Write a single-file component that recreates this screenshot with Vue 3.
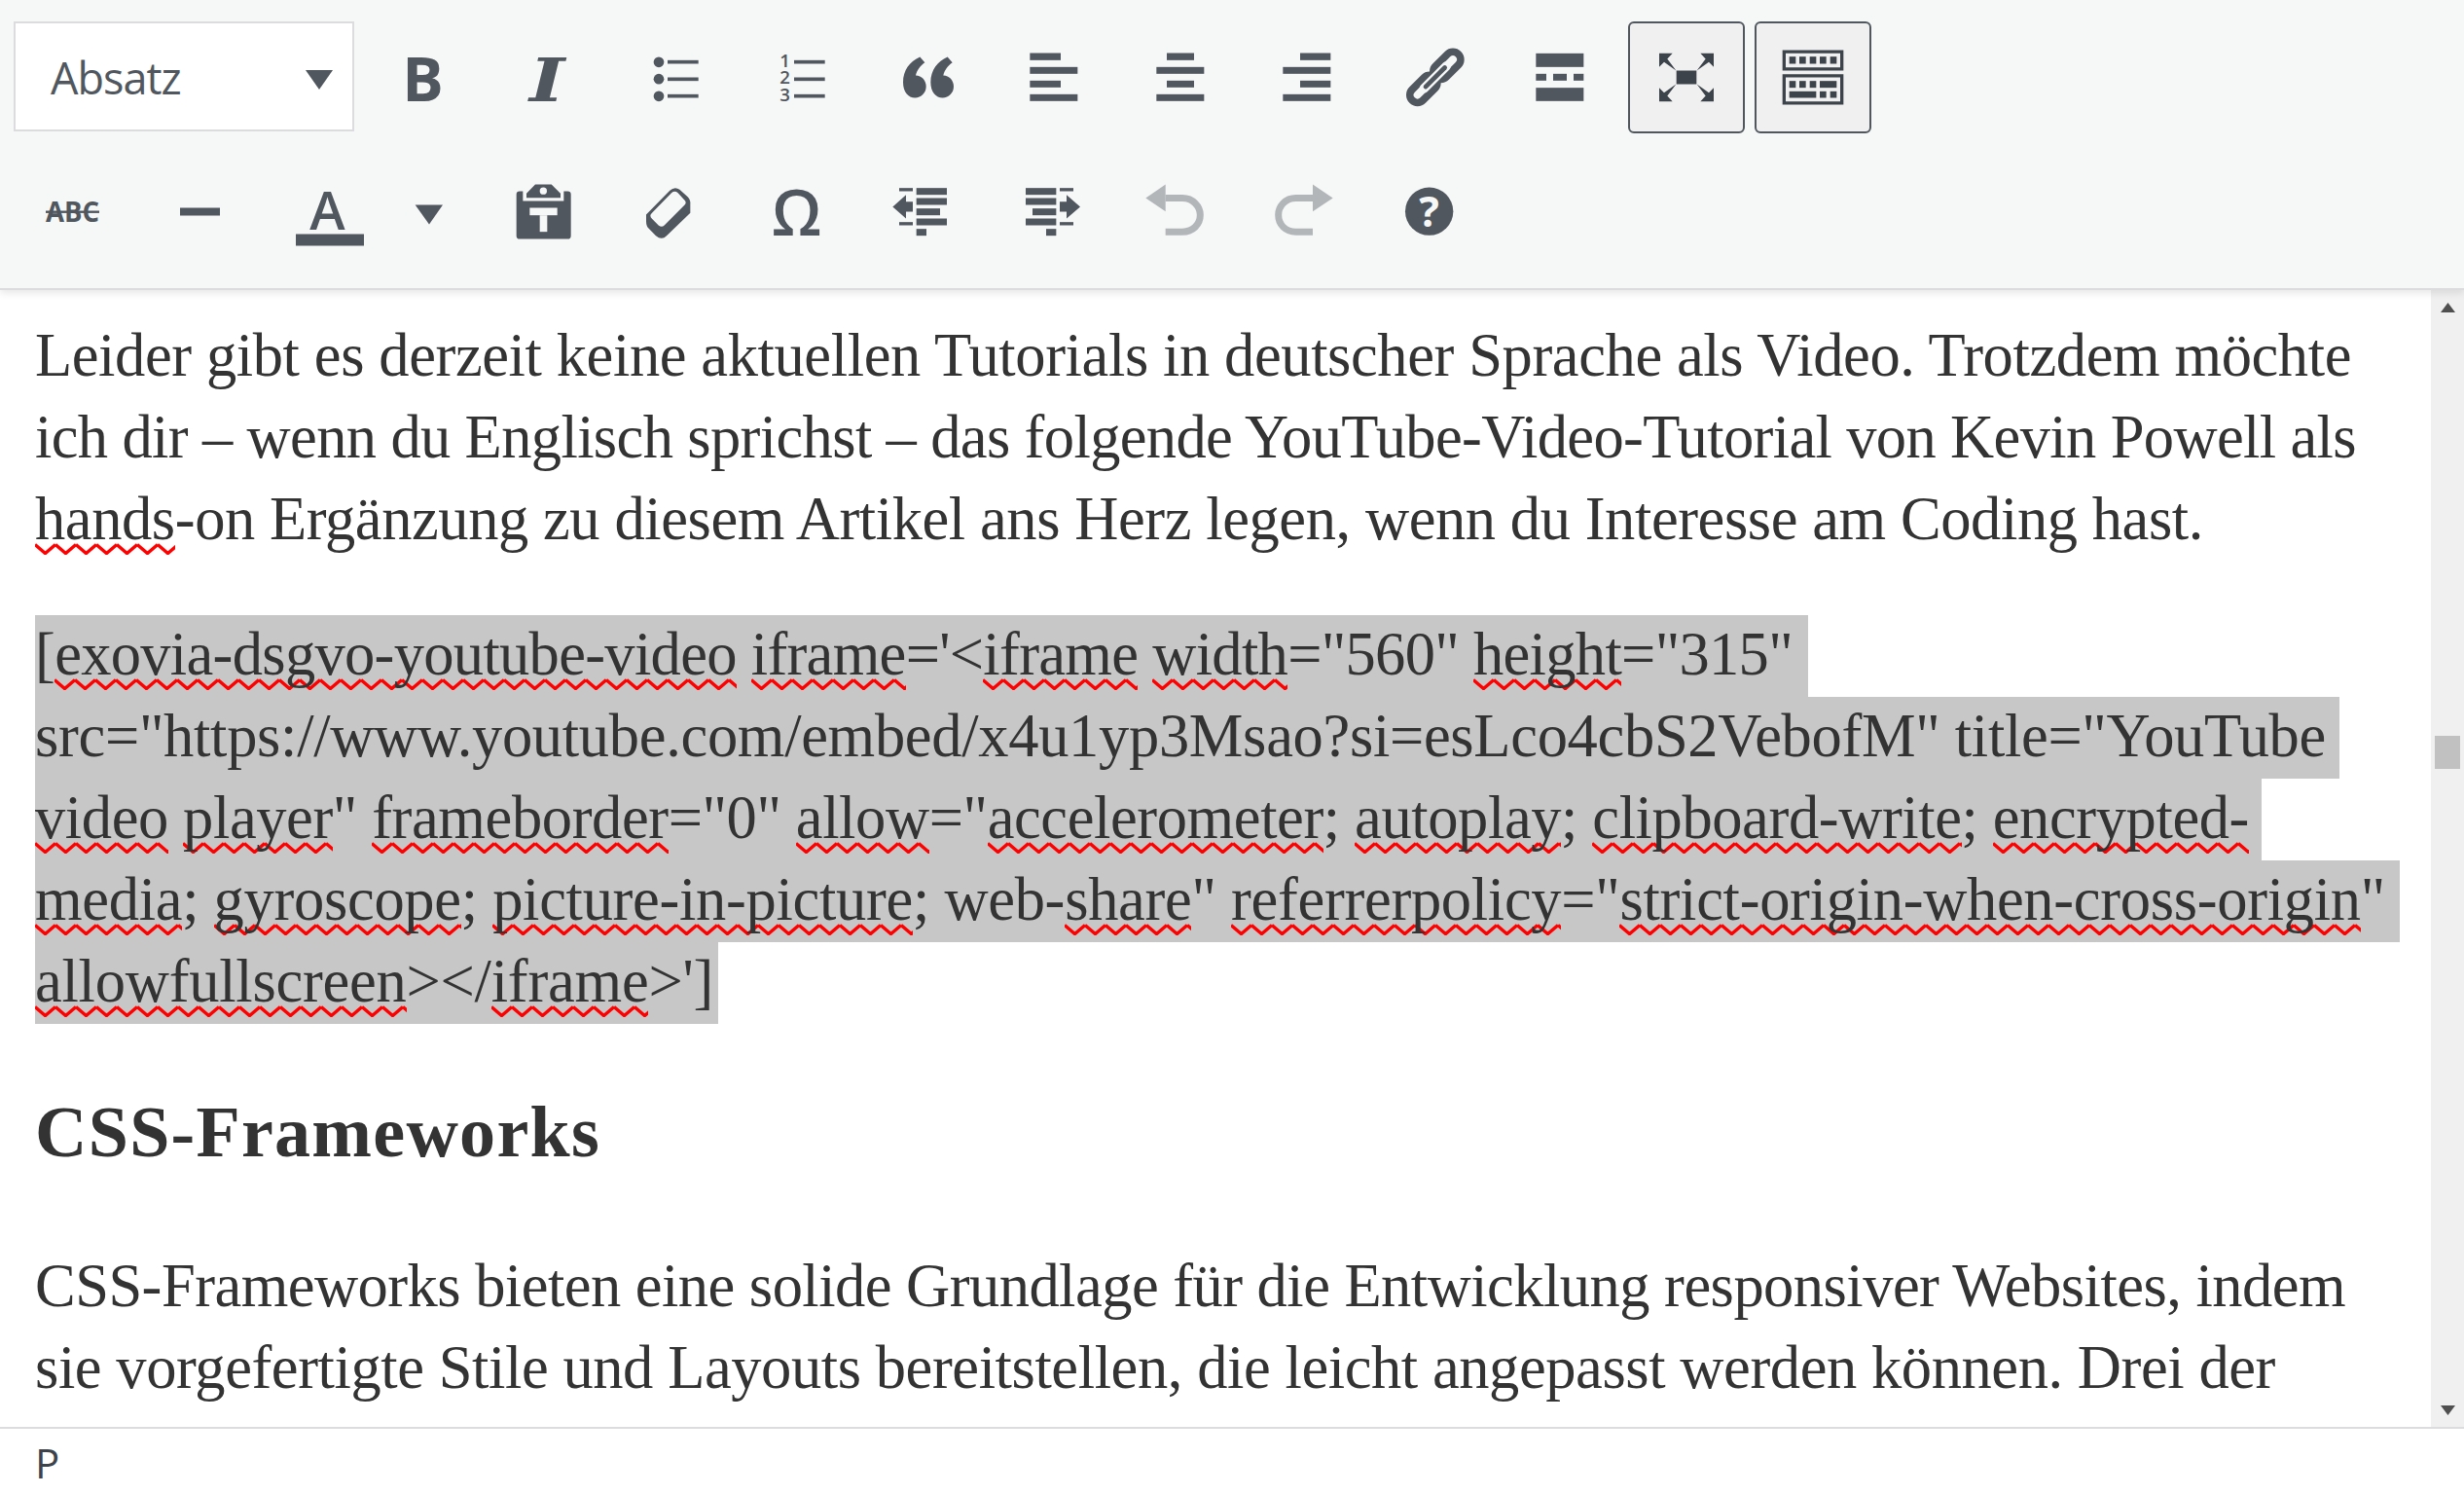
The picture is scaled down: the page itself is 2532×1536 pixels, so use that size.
<script setup>
import { reactive, onMounted } from 'vue'

const mk = (text, target, bg) => ({
  segs: text.split('~').map((t, i) => ({ t, wave: i % 2 === 1 })),
  chars: text.replace(/~/g, '').length,
  target,
  bg,
  ls: 0
})

const blocks = reactive([
  { cls: 'para first', lines: [
    mk('Leider gibt es derzeit keine aktuellen Tutorials in deutscher Sprache als Video. Trotzdem möchte', 2380),
    mk('ich dir – wenn du Englisch sprichst – das folgende YouTube-Video-Tutorial von Kevin Powell als', 2385),
    mk('~hands~-on Ergänzung zu diesem Artikel ans Herz legen, wenn du Interesse am Coding hast.', 2228)
  ] },
  { cls: 'para selected', lines: [
    mk('[~exovia-dsgvo-youtube-video~ ~iframe~=\'<~iframe~ ~width~="560" ~height~="315"', 1806, 1822),
    mk('src="https://www.youtube.com/embed/x4u1yp3Msao?si=esLco4cbS2VebofM" title="YouTube', 2354, 2368),
    mk('~video~ ~player~" ~frameborder~="0" ~allow~="~accelerometer~; ~autoplay~; ~clipboard-write~; ~encrypted-~', 2275, 2288),
    mk('~media~; ~gyroscope~; ~picture-in-picture~; web-~share~" ~referrerpolicy~="~strict-origin-when-cross-origin~"', 2415, 2430),
    mk('~allowfullscreen~></~iframe~>\']', 697, 702)
  ] },
  { cls: 'heading', lines: [mk('CSS-Frameworks', 581)] },
  { cls: 'para', lines: [
    mk('CSS-Frameworks bieten eine solide Grundlage für die Entwicklung responsiver Websites, indem', 2374),
    mk('sie vorgefertigte Stile und Layouts bereitstellen, die leicht angepasst werden können. Drei der', 2302)
  ] }
])

const runs = new Map()
const setRun = (line, el) => { if (el) runs.set(line, el) }

onMounted(() => {
  runs.forEach((el, line) => {
    const w = el.getBoundingClientRect().width
    line.ls = (line.target - w) / line.chars
  })
})
</script>

<template>
  <div class="editor">
    <header class="toolbar">
      <div class="row">
        <div class="select">
          <span class="select-label">Absatz</span>
          <svg class="select-caret" viewBox="0 0 28 20"><path d="M0 0H28L14 20Z" /></svg>
        </div>
        <div class="btn">
          <svg class="ico" viewBox="63 52.5 192 192"><text class="t-sans t-bold" x="100" y="220" font-size="190">B</text></svg>
        </div>
        <div class="btn">
          <svg class="ico" viewBox="453 52.5 192 192"><text class="t-slab" x="492" y="220" font-size="186" textLength="109" lengthAdjust="spacingAndGlyphs">I</text></svg>
        </div>
        <div class="btn">
          <svg class="ico" viewBox="843 52.5 192 192">
            <circle cx="891" cy="100" r="16" /><circle cx="891" cy="152" r="16" /><circle cx="891" cy="205" r="16" />
            <rect x="918" y="94" width="95" height="11" /><rect x="918" y="147" width="95" height="11" /><rect x="918" y="199" width="95" height="11" />
          </svg>
        </div>
        <div class="btn">
          <svg class="ico" viewBox="1233 52.5 192 192">
            <text class="t-sans t-semi" x="1264" y="115" font-size="56">1</text>
            <text class="t-sans t-semi" x="1264" y="167" font-size="56">2</text>
            <text class="t-sans t-semi" x="1264" y="220" font-size="56">3</text>
            <rect x="1308" y="94" width="95" height="11" /><rect x="1308" y="147" width="95" height="11" /><rect x="1308" y="199" width="95" height="11" />
          </svg>
        </div>
        <div class="btn">
          <svg class="ico" viewBox="63 52.5 192 192">
            <path d="M136 84L151 101C137 111 126 126 123 141C141 141 155 156 155 175C155 195 140 210 121 210C100 210 84 192 84 162C84 125 105 98 136 84Z" />
            <path d="M221 84L236 101C222 111 211 126 208 141C226 141 240 156 240 175C240 195 225 210 206 210C185 210 169 192 169 162C169 125 190 98 221 84Z" />
          </svg>
        </div>
        <div class="btn">
          <svg class="ico" viewBox="453 52.5 192 192">
            <rect x="475" y="72" width="95" height="22" /><rect x="475" y="115" width="147" height="21" /><rect x="475" y="157" width="95" height="21" /><rect x="475" y="199" width="147" height="21" />
          </svg>
        </div>
        <div class="btn">
          <svg class="ico" viewBox="843 52.5 192 192">
            <rect x="897" y="72" width="84" height="22" /><rect x="865" y="115" width="147" height="21" /><rect x="897" y="157" width="84" height="21" /><rect x="865" y="199" width="147" height="21" />
          </svg>
        </div>
        <div class="btn">
          <svg class="ico" viewBox="1233 52.5 192 192">
            <rect x="1308" y="72" width="94" height="22" /><rect x="1255" y="115" width="147" height="21" /><rect x="1308" y="157" width="94" height="21" /><rect x="1255" y="199" width="147" height="21" />
          </svg>
        </div>
        <div class="btn">
          <svg class="ico" viewBox="63 112.5 192 192">
            <line class="l-dark" x1="110" y1="261" x2="147" y2="224" />
            <line class="l-cut" x1="110" y1="261" x2="147" y2="224" />
            <line class="l-dark" x1="182" y1="189" x2="219" y2="152" />
            <line class="l-cut" x1="182" y1="189" x2="219" y2="152" />
            <line class="l-band" x1="130" y1="241" x2="199" y2="172" />
            <line class="l-core" x1="135" y1="236" x2="194" y2="177" />
          </svg>
        </div>
        <div class="btn">
          <svg class="ico" viewBox="453 112.5 192 192">
            <rect x="475" y="133" width="147" height="42" /><rect x="475" y="196" width="32" height="21" /><rect x="528" y="196" width="42" height="21" /><rect x="591" y="196" width="31" height="21" /><rect x="475" y="239" width="147" height="41" />
          </svg>
        </div>
        <div class="btn on">
          <svg class="ico" viewBox="843 112.5 192 192">
            <rect x="908" y="186" width="62" height="42" />
            <path d="M855 133H896L880 150L907 186L870 160L855 175Z" />
            <path d="M1023 133H982L998 150L971 186L1008 160L1023 175Z" />
            <path d="M855 281H896L880 264L907 228L870 254L855 239Z" />
            <path d="M1023 281H982L998 264L971 228L1008 254L1023 239Z" />
          </svg>
        </div>
        <div class="btn on">
          <svg class="ico" viewBox="1233 112.5 192 192">
            <path fill-rule="evenodd" d="M1235 123H1423V186H1235ZM1245 133V176H1413V133Z" />
            <rect x="1256" y="143" width="20" height="22" /><rect x="1287" y="143" width="20" height="22" /><rect x="1319" y="143" width="20" height="22" /><rect x="1350" y="143" width="20" height="22" /><rect x="1382" y="143" width="20" height="22" />
            <path fill-rule="evenodd" d="M1235 197H1423V291H1235ZM1245 207V281H1413V207Z" />
            <rect x="1256" y="218" width="20" height="21" /><rect x="1287" y="218" width="20" height="21" /><rect x="1319" y="218" width="20" height="21" /><rect x="1350" y="218" width="52" height="21" />
            <rect x="1256" y="250" width="83" height="20" /><rect x="1350" y="250" width="20" height="20" /><rect x="1382" y="250" width="20" height="20" />
          </svg>
        </div>
      </div>

      <div class="row">
        <div class="btn">
          <svg class="ico" viewBox="42 185.5 64 64">
            <text class="t-sans t-bold" x="47" y="227" font-size="28" textLength="55" lengthAdjust="spacingAndGlyphs">ABC</text>
            <rect x="47" y="216" width="55" height="2.4" />
          </svg>
        </div>
        <div class="btn">
          <svg class="ico" viewBox="172 185.5 64 64"><rect x="185" y="213" width="41" height="8" /></svg>
        </div>
        <div class="split">
          <svg class="ico-a" viewBox="304 185.5 70 70">
            <text class="t-sans t-semi" x="336.5" y="235" font-size="55" text-anchor="middle">A</text>
            <rect x="304" y="240" width="70" height="12" />
          </svg>
          <svg class="ico" viewBox="90 466.5 192 192"><path d="M143 540H228L186 600Z" /></svg>
        </div>
        <div class="btn">
          <svg class="ico" viewBox="441 466.5 192 192">
            <path d="M452 508Q452 498 462 498H472V528H598V498H610Q620 498 620 508V635Q620 645 610 645H462Q452 645 452 635Z" />
            <path fill-rule="evenodd" d="M510 477H560L588 505V518H483V505ZM535 486A11 11 0 1 0 535 508A11 11 0 1 0 535 486Z" />
            <rect class="cut" x="493" y="549" width="85" height="23" />
            <rect class="cut" x="524" y="572" width="23" height="51" />
          </svg>
        </div>
        <div class="btn">
          <svg class="ico" viewBox="831 466.5 192 192">
            <path fill-rule="evenodd" d="M925 496Q940 482 955 493L980 515Q990 525 988 540V565L915 635Q900 650 882 635L860 613Q852 605 852 590V570ZM930 503L870 565Q860 573 870 583L890 603Q900 611 908 603L970 541Q978 533 970 525L950 503Q940 495 930 503Z" />
          </svg>
        </div>
        <div class="btn">
          <svg class="ico" viewBox="1221 466.5 192 192"><text class="t-sans t-semi" x="1316" y="635" font-size="196" text-anchor="middle">Ω</text></svg>
        </div>
        <div class="btn">
          <svg class="ico" viewBox="51 466.5 192 192">
            <rect x="72" y="488" width="42" height="10" /><rect x="125" y="488" width="94" height="21" /><rect x="125" y="519" width="94" height="21" /><rect x="125" y="551" width="73" height="21" /><rect x="125" y="582" width="94" height="21" /><rect x="72" y="593" width="42" height="10" /><rect x="125" y="614" width="31" height="21" />
            <path d="M52 546L93 509V530H114V561H93V582Z" />
          </svg>
        </div>
        <div class="btn">
          <svg class="ico" viewBox="441 466.5 192 192">
            <rect x="462" y="488" width="94" height="21" /><rect x="567" y="488" width="42" height="10" /><rect x="462" y="519" width="94" height="21" /><rect x="483" y="551" width="73" height="21" /><rect x="462" y="582" width="94" height="21" /><rect x="567" y="593" width="42" height="10" /><rect x="525" y="614" width="31" height="21" />
            <path d="M630 546L588 509V530H567V561H588V582Z" />
          </svg>
        </div>
        <div class="btn off">
          <svg class="ico" viewBox="831 466.5 192 192">
            <path d="M832 519L893 477V560Z" />
            <path class="l-off" d="M893 519H945C978 519 1000 545 1000 571C1000 600 978 623 945 623H893" />
          </svg>
        </div>
        <div class="btn off">
          <svg class="ico" viewBox="1221 466.5 192 192">
            <path d="M1409 519L1347 477V560Z" />
            <path class="l-off" d="M1347 519H1295C1262 519 1241 545 1241 571C1241 600 1262 623 1295 623H1347" />
          </svg>
        </div>
        <div class="btn">
          <svg class="ico" viewBox="51 526.5 192 192">
            <circle cx="146" cy="620" r="74" />
            <text class="t-sans t-bold cut" x="146" y="668" font-size="130" text-anchor="middle">?</text>
          </svg>
        </div>
      </div>
    </header>

    <div class="workspace">
      <main class="content">
        <div v-for="(block, b) in blocks" :key="b" :class="block.cls">
          <div
            v-for="(line, l) in block.lines"
            :key="l"
            class="line"
            :style="line.bg ? { width: line.bg + 'px' } : null"
          >
            <span class="run" :ref="el => setRun(line, el)" :style="{ letterSpacing: line.ls + 'px' }"><template v-for="(seg, s) in line.segs" :key="s"><span v-if="seg.wave" class="wave">{{ seg.t }}</span><template v-else>{{ seg.t }}</template></template></span>
          </div>
        </div>
      </main>
      <aside class="scrollbar">
        <svg class="sb-arrow" viewBox="0 0 15 10"><path d="M7.5 0L15 10H0Z" /></svg>
        <div class="sb-thumb"></div>
        <svg class="sb-arrow sb-down" viewBox="0 0 15 10"><path d="M0 0H15L7.5 10Z" /></svg>
      </aside>
    </div>

    <footer class="status">P</footer>
  </div>
</template>

<style>
html, body { margin: 0; background: #fff; }
</style>

<style scoped>
.editor {
  width: 2532px;
  height: 1536px;
  display: flex;
  flex-direction: column;
  overflow: hidden;
  background: #fff;
}
.toolbar {
  position: relative;
  z-index: 2;
  flex: none;
  box-sizing: border-box;
  height: 298px;
  padding: 22px 0 0 14px;
  display: flex;
  flex-direction: column;
  gap: 23px;
  background: #f6f7f7;
  border-bottom: 2px solid #dcdcde;
  box-shadow: 0 3px 8px rgba(0, 0, 0, 0.1);
}
.row {
  display: flex;
  gap: 10px;
  height: 115px;
}
.select {
  box-sizing: border-box;
  width: 350px;
  height: 113px;
  margin-right: -1px;
  padding: 2px 20px 0 36px;
  display: flex;
  align-items: center;
  justify-content: space-between;
  background: #fff;
  border: 2px solid #dcdcde;
}
.select-label {
  font: 400 45px "Open Sans", sans-serif;
  letter-spacing: -1px;
  color: #50575e;
}
.select-caret {
  width: 28px;
  height: 20px;
  margin-top: 5px;
  fill: #50575e;
}
.btn {
  box-sizing: border-box;
  width: 120px;
  height: 115px;
  display: flex;
  align-items: center;
  justify-content: center;
  border: 2px solid transparent;
  border-radius: 6px;
}
.btn.on {
  background: #f0f0f1;
  border-color: #50575e;
}
.ico {
  width: 64px;
  height: 64px;
  overflow: visible;
  fill: #50575e;
}
.on .ico { fill: #3c434a; }
.off .ico { fill: #b3b6b9; }
.split {
  width: 215px;
  height: 115px;
  padding-left: 30px;
  box-sizing: border-box;
  display: flex;
  align-items: flex-start;
  gap: 35px;
  padding-top: 25.5px;
}
.ico-a {
  width: 70px;
  height: 70px;
  overflow: visible;
  fill: #50575e;
}
.t-sans { font-family: "Open Sans", sans-serif; }
.t-bold { font-weight: 700; }
.t-semi { font-weight: 600; }
.t-slab { font-family: "DejaVu Serif", serif; font-weight: 700; font-style: italic; }
.cut { fill: #f6f7f7; }
.l-dark { stroke: #50575e; stroke-width: 70; stroke-linecap: round; }
.l-cut { stroke: #f6f7f7; stroke-width: 24; stroke-linecap: round; }
.l-band { stroke: #f6f7f7; stroke-width: 28; stroke-linecap: round; }
.l-core { stroke: #50575e; stroke-width: 14; stroke-linecap: round; }
.l-off { fill: none; stroke: #b3b6b9; stroke-width: 21; }

.workspace {
  flex: none;
  height: 1168px;
  display: flex;
  overflow: hidden;
}
.content {
  flex: 1;
  min-width: 0;
  padding-left: 36px;
  overflow: hidden;
  font-family: "Liberation Serif", "Times New Roman", serif;
  font-size: 62.5px;
  color: #333;
}
.para.first { padding-top: 27px; margin-bottom: 55px; }
.line {
  height: 84px;
  line-height: 80px;
  white-space: pre;
}
.selected .line { background: #c7c7c7; }
.heading {
  margin: 61px 0 68px;
}
.heading .line {
  height: 100px;
  line-height: 100px;
  font-size: 74px;
  font-weight: 700;
}
.wave {
  padding-bottom: 1.5px;
  background-image: url("data:image/svg+xml,%3Csvg xmlns='http://www.w3.org/2000/svg' width='21' height='12'%3E%3Cpath d='M0 1.5L10.5 10.5L21 1.5' fill='none' stroke='%23f00' stroke-width='3.4'/%3E%3C/svg%3E");
  background-repeat: repeat-x;
  background-position: 0 100%;
  background-size: 21px 12px;
}
.scrollbar {
  flex: none;
  box-sizing: border-box;
  width: 34px;
  padding: 13px 0 12px;
  display: flex;
  flex-direction: column;
  align-items: center;
  background: #f0f0f0;
}
.sb-arrow {
  width: 15px;
  height: 10px;
  fill: #505050;
  flex: none;
}
.sb-thumb {
  width: 26px;
  height: 34px;
  margin-top: 435px;
  background: #c1c1c1;
}
.sb-down { margin-top: auto; }
.status {
  flex: 1;
  padding-left: 36px;
  border-top: 2px solid #dcdcde;
  display: flex;
  align-items: center;
  font: 400 42px "Open Sans", sans-serif;
  color: #3c434a;
}
</style>
